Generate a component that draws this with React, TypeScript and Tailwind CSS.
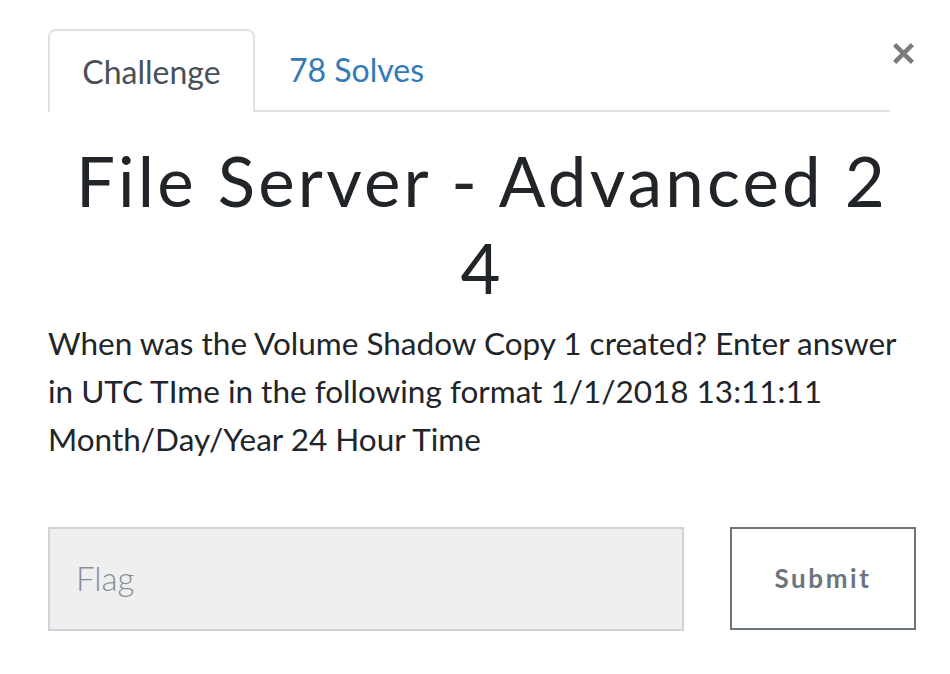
import React from "react";

export default function App() {
  return (
    <div className="min-h-[674px] w-[950px] bg-white" style={{ fontFamily: "Lato, 'Noto Sans', sans-serif" }}>
      <div className="pl-[48px] pr-[34px] pt-[29px]">
        <div className="flex items-start">
          <div className="flex flex-1 border-b-2 border-[#dee2e6]">
            <div className="-mb-[2px] flex h-[83px] w-[207px] items-center justify-center rounded-t-[8px] border-2 border-b-0 border-[#dee2e6] bg-white text-[32px] text-[#495057]">
              Challenge
            </div>
            <div className="flex h-[81px] items-center pl-[34px] text-[32px] text-[#337ab7]">78 Solves</div>
          </div>
          <button className="mt-[12px] flex h-[24px] w-[26px] items-center justify-center text-[#7b7b7b]">
            <svg width="23" height="23" viewBox="0 0 22 22">
              <path d="M2.5 2.5 L19.5 19.5 M19.5 2.5 L2.5 19.5" stroke="currentColor" strokeWidth="4.2" strokeLinecap="butt" />
            </svg>
          </button>
        </div>
      </div>
      <div className="pl-[48px] pr-[34px]">
        <h1 className="mt-[25px] text-center text-[69px] leading-[87px] tracking-[3.2px] text-[#212529]">
          File Server - Advanced 2
          <br />4
        </h1>
        <p className="mt-[8px] text-[31.5px] leading-[48px] text-[#212529]">
          When was the Volume Shadow Copy 1 created? Enter answer in UTC TIme in the following format 1/1/2018 13:11:11 Month/Day/Year 24 Hour Time
        </p>
        <div className="mt-[64px] flex items-start gap-[46px]">
          <div className="flex h-[104px] w-[636px] items-center border-2 border-[#ced4da] bg-[#efefef] pl-[26px] text-[33px] font-light text-[#868e96]">
            Flag
          </div>
          <button className="flex h-[103px] w-[186px] items-center justify-center border-2 border-[#6c757d] bg-white text-[26px] font-bold tracking-[2.6px] text-[#6c757d]">
            Submit
          </button>
        </div>
      </div>
    </div>
  );
}
